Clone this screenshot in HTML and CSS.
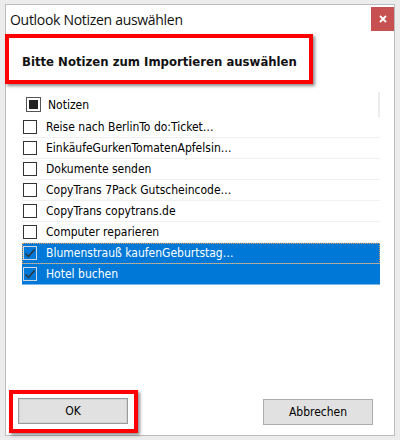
FILE: index.html
```html
<!DOCTYPE html>
<html lang="de">
<head>
  <meta charset="UTF-8" />
  <title>Outlook Notizen auswählen</title>
  <link rel="stylesheet" href="styles.css">
</head>
<body>
  <div class="window">
    <div class="titlebar">
      <span class="title">Outlook Notizen auswählen</span>
      <button class="close">
        <svg width="10" height="10" viewBox="0 0 10 10"><path d="M2 2L8 8M8 2L2 8" stroke="#fff" stroke-width="1.8"/></svg>
      </button>
    </div>

    <div class="prompt">Bitte Notizen zum Importieren auswählen</div>

    <div class="list">
      <div class="list-head"><span class="box box-mixed"><i></i></span>Notizen</div>
      <div class="row"><span class="box"></span>Reise nach BerlinTo do:Ticket…</div>
      <div class="row"><span class="box"></span>EinkäufeGurkenTomatenApfelsin…</div>
      <div class="row"><span class="box"></span>Dokumente senden</div>
      <div class="row"><span class="box"></span>CopyTrans 7Pack Gutscheincode…</div>
      <div class="row"><span class="box"></span>CopyTrans copytrans.de</div>
      <div class="row"><span class="box"></span>Computer reparieren</div>
      <div class="row selected focused">
        <span class="box checked"><svg width="12" height="12" viewBox="0 0 12 12"><path d="M1.5 6.5L4.5 9.5L10.5 2.5" fill="none" stroke="#333" stroke-width="1.4"/></svg></span>Blumenstrauß kaufenGeburtstag…
      </div>
      <div class="row selected">
        <span class="box checked"><svg width="12" height="12" viewBox="0 0 12 12"><path d="M1.5 6.5L4.5 9.5L10.5 2.5" fill="none" stroke="#333" stroke-width="1.4"/></svg></span>Hotel buchen
      </div>
    </div>

    <div class="actions">
      <div class="ok-frame"><button class="btn btn-default">OK</button></div>
      <button class="btn">Abbrechen</button>
    </div>
  </div>
</body>
</html>
```

FILE: styles.css
```css
body {
  margin: 0;
  height: 440px;
  overflow: hidden;
  background: #ececec;
  font-family: "DejaVu Sans Condensed", "DejaVu Sans", sans-serif;
  font-stretch: condensed;
  font-size: 12px;
  color: #000;
}

.window {
  margin: 4px 0 0 5px;
  width: 390px;
  height: 432px;
  box-sizing: border-box;
  border: 1px solid #bdbdbd;
  background: #fff;
  display: flex;
  flex-direction: column;
}

.titlebar {
  height: 29px;
  display: flex;
  padding-left: 4px;
}

.title {
  margin-right: auto;
  line-height: 29px;
  font-family: "Open Sans", sans-serif;
  font-stretch: normal;
  font-size: 14px;
  letter-spacing: -0.3px;
  color: #111;
}

.close {
  width: 23px;
  height: 24px;
  margin-top: 2px;
  padding: 0;
  border: none;
  background: #c75050;
  display: flex;
  align-items: center;
  justify-content: center;
}

.prompt {
  margin-left: -1px;
  width: 308px;
  height: 50px;
  box-sizing: border-box;
  border: 4px solid #f00;
  box-shadow: 2px 2px 3px rgba(0,0,0,0.45);
  padding: 4px 0 0 13px;
  display: flex;
  align-items: center;
  font-weight: bold;
  font-size: 13px;
  color: #111;
}

.list {
  margin: 8px 0 0 16px;
  width: 358px;
}

.list-head {
  height: 25px;
  box-sizing: border-box;
  border-right: 2px solid #ececec;
  padding-left: 4px;
  display: flex;
  align-items: center;
  gap: 7px;
}

.row {
  height: 21px;
  box-sizing: border-box;
  border-bottom: 1px solid #f0f0f0;
  padding-left: 1px;
  display: flex;
  align-items: center;
  gap: 9px;
  white-space: nowrap;
}

.box {
  width: 14px;
  height: 14px;
  box-sizing: border-box;
  border: 1px solid #333;
  background: #fff;
  display: flex;
  align-items: center;
  justify-content: center;
  flex-shrink: 0;
}

.box-mixed {
  width: 15px;
  height: 15px;
  border-color: #555;
}

.box-mixed i {
  width: 9px;
  height: 9px;
  background: #222;
}

.selected {
  background: #0078d7;
  color: #fff;
  border-bottom-color: #7db6ea;
}

.focused {
  outline: 1px dotted #d9a35a;
  outline-offset: -1px;
}

.box.checked {
  background: transparent;
  border-color: #cfd8e0;
}

.actions {
  margin-top: auto;
  padding: 0 21px 2px 3px;
  display: flex;
  justify-content: space-between;
  align-items: center;
}

.ok-frame {
  border: 4px solid #f00;
  padding: 4px 6px 5px 5px;
  box-shadow: 2px 2px 3px rgba(0,0,0,0.45);
}

.btn {
  width: 110px;
  height: 26px;
  padding: 0;
  border: 1px solid #adadad;
  background: #e1e1e1;
  font-family: inherit;
  font-stretch: condensed;
  font-size: 12px;
  color: #000;
}

.btn-default {
  border-color: #9a9a9a;
  box-shadow: inset 0 0 0 1px #d4d4d4;
}
```
